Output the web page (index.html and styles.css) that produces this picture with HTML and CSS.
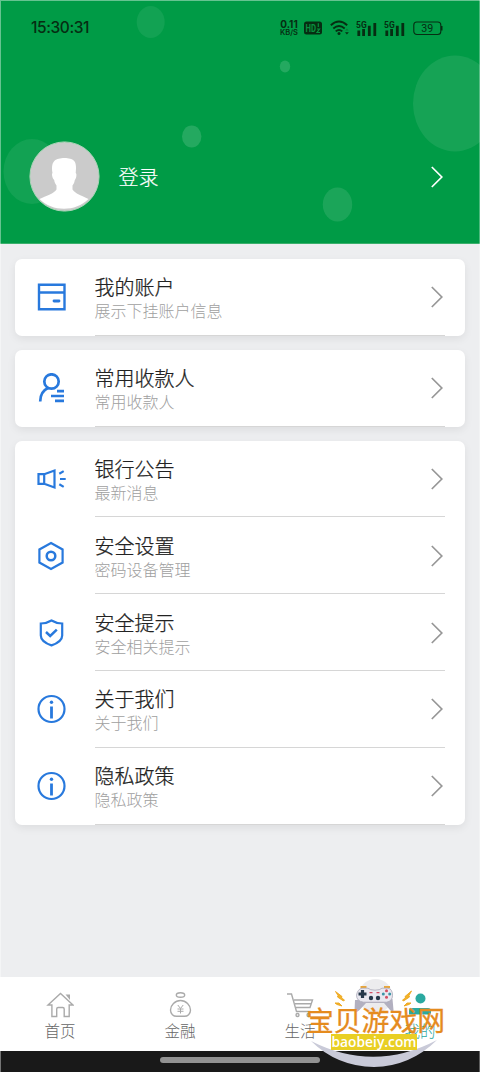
FILE: index.html
```html
<!DOCTYPE html>
<html lang="zh-CN">
<head>
<meta charset="utf-8">
<title>我的</title>
<link rel="stylesheet" href="styles.css">
</head>
<body>
<svg class="defs" width="0" height="0">
  <symbol id="chevron" viewBox="0 0 14 24"><path d="M1.8 2 11.800 12 1.800 22" fill="none" stroke="currentColor" stroke-width="1.700"/></symbol>
  <symbol id="info" viewBox="0 0 30 30"><circle cx="14.500" cy="15" r="13"/><path d="M14.500 12.500V24.500" stroke-width="2.800"/><circle cx="14.500" cy="8.300" r="1.700" fill="currentColor" stroke="none"/></symbol>
</svg>
<div class="screen">
  <header class="header">
    <svg class="bubbles" viewBox="0 0 480 244">
      <g fill="#fff">
        <ellipse cx="150.700" cy="22" rx="14" ry="16" opacity=".07"/>
        <ellipse cx="285" cy="66.500" rx="5.200" ry="6" opacity=".14"/>
        <ellipse cx="455" cy="103.500" rx="42" ry="48" opacity=".085"/>
        <ellipse cx="191.700" cy="136.500" rx="9.700" ry="11" opacity=".14"/>
        <ellipse cx="32" cy="171.500" rx="28.500" ry="32.500" opacity=".07"/>
        <ellipse cx="337.500" cy="204.500" rx="14.700" ry="17" opacity=".105"/>
      </g>
    </svg>
    <div class="status">
      <span class="clock">15:30:31</span>
      <span class="speed"><b>0.11</b><i>KB/S</i></span>
      <svg class="hd" width="18" height="14" viewBox="0 0 18 14"><rect y=".5" width="18" height="13" rx="2.500" fill="currentColor"/><text x="1.500" y="10.900" font-size="10.500" font-weight="700" textLength="10.500" lengthAdjust="spacingAndGlyphs">HD</text><path d="M14.300 2.200V6M13 8h2.500L13 11.500h3" fill="none" stroke="#08903f" stroke-width="1.200"/></svg>
      <svg class="wifi" width="20" height="16" viewBox="0 0 20 16"><g fill="none" stroke="currentColor" stroke-width="1.900"><path d="M.8 5.200Q9 -2.200 17.200 5.200M3.300 8.400Q9 3.600 14.700 8.400M5.700 11.400Q9 8.600 12.300 11.400"/></g><circle cx="9" cy="13.500" r="1.500" fill="currentColor"/><path d="m15.200 10.500 1.700-2 1.700 2z" fill="#087635"/><path d="m15 12.300 1.900 2.200 1.900-2.200z" fill="currentColor"/></svg>
      <svg class="signal" width="22" height="17" viewBox="0 0 22 17"><text x="0" y="7.500" font-size="8.500" font-weight="700">5G</text><path d="M2.800 10.500v5.500M7.600 9v7M13.300 5.800V16M18.800 3V16" fill="none" stroke="currentColor" stroke-width="2.800"/></svg>
      <svg class="signal" width="22" height="17" viewBox="0 0 22 17"><text x="0" y="7.500" font-size="8.500" font-weight="700">5G</text><path d="M2.800 10.500v5.500M7.600 9v7M13.300 5.800V16M18.800 3V16" fill="none" stroke="currentColor" stroke-width="2.800"/></svg>
      <svg class="battery" width="31" height="15" viewBox="0 0 31 15"><rect x=".8" y="1" width="27" height="12.500" rx="3" fill="none" stroke="currentColor" stroke-width="1.100"/><path d="M28 5h1.500v4.500H28z" fill="currentColor"/><text x="8.300" y="11.300" font-size="11" textLength="12" lengthAdjust="spacingAndGlyphs">39</text></svg>
    </div>
    <div class="profile">
      <svg class="avatar" width="71" height="71" viewBox="0 0 71 71"><circle cx="35.500" cy="35.500" r="34.600" fill="#cbcbcb" stroke="#a9d4b6" stroke-width="1"/><path d="M23.500 32C21.500 19 27 17.400 35.500 17c8.500.3 13 2 11.200 15 1.300.5.800 5.500-.9 7-.5 3.500-1.800 4.500-2.300 5.500v4c3 4.500 8.500 5.500 16 9.500-13 13-36 13-49 0 8-4 14-5 17-9.500v-4c-1.500-2-2-3.500-2.300-5.500-1.700-1.500-2.900-6-1.700-7Z" fill="#fff"/></svg>
      <span class="login">登录</span>
      <svg class="chevron" width="14" height="24"><use href="#chevron"/></svg>
    </div>
  </header>
  <main class="content">
    <section class="card">
      <div class="row">
        <svg class="icon" viewBox="0 0 30 30"><path d="M2 2.800h25.500v24.500H2zM2 10.500h25.500" stroke-width="2.400"/><path d="M17 19h5" stroke-width="2.800" stroke-linecap="round"/></svg>
        <div class="body"><div class="text"><h2>我的账户</h2><p>展示下挂账户信息</p></div><svg class="chevron" width="14" height="24"><use href="#chevron"/></svg></div>
      </div>
    </section>
    <section class="card">
      <div class="row">
        <svg class="icon" viewBox="0 0 30 30"><g stroke-width="2.700"><circle cx="14.500" cy="8.500" r="7.200"/><path d="M3.200 28.500Q3.200 18.500 11.500 14.800M20 18.200h7M14 23h13M18 27.800h9"/></g></svg>
        <div class="body"><div class="text"><h2>常用收款人</h2><p>常用收款人</p></div><svg class="chevron" width="14" height="24"><use href="#chevron"/></svg></div>
      </div>
    </section>
    <section class="card">
      <div class="row">
        <svg class="icon" viewBox="0 0 30 30"><path d="M1.500 10.200h5.700v9.600H1.500zM7.200 10.200 17.500 6.500v17L7.200 19.800M22.300 9.700l4.400-2.600M23 15h5.700M22.300 20.300l4.400 2.600"/></svg>
        <div class="body"><div class="text"><h2>银行公告</h2><p>最新消息</p></div><svg class="chevron" width="14" height="24"><use href="#chevron"/></svg></div>
      </div>
      <div class="row">
        <svg class="icon" viewBox="0 0 30 30"><path d="m14 2 11.600 6.500v13L14 28 2.400 21.500v-13z"/><circle cx="14" cy="15" r="4.300" stroke-width="2.500"/></svg>
        <div class="body"><div class="text"><h2>安全设置</h2><p>密码设备管理</p></div><svg class="chevron" width="14" height="24"><use href="#chevron"/></svg></div>
      </div>
      <div class="row">
        <svg class="icon" viewBox="0 0 30 30"><path d="M14.500 2.500Q19.500 5.500 25.200 5.500v12c0 5-5.200 8-10.700 9.900C9 25.500 3.800 22.500 3.800 17.500v-12Q9.500 5.500 14.500 2.500Z"/><path d="m9 14 4.200 4 6.600-6.300" stroke-width="2.500"/></svg>
        <div class="body"><div class="text"><h2>安全提示</h2><p>安全相关提示</p></div><svg class="chevron" width="14" height="24"><use href="#chevron"/></svg></div>
      </div>
      <div class="row">
        <svg class="icon"><use href="#info"/></svg>
        <div class="body"><div class="text"><h2>关于我们</h2><p>关于我们</p></div><svg class="chevron" width="14" height="24"><use href="#chevron"/></svg></div>
      </div>
      <div class="row">
        <svg class="icon"><use href="#info"/></svg>
        <div class="body"><div class="text"><h2>隐私政策</h2><p>隐私政策</p></div><svg class="chevron" width="14" height="24"><use href="#chevron"/></svg></div>
      </div>
    </section>
  </main>
  <nav class="tabs">
    <a class="tab"><svg width="28" height="28" viewBox="0 0 28 28"><path d="M2 14 14.500 2.500 27 14h-3.800v11.500h-5V18q0-1.500-1.500-1.500h-4.500Q10.700 16.500 10.700 18v7.500H5.900V14Z"/><path d="M19.500 3.500h4.500V9z" fill="currentColor" stroke="none"/></svg><span>首页</span></a>
    <a class="tab"><svg width="28" height="28" viewBox="0 0 28 28"><ellipse cx="14.500" cy="4" rx="4.200" ry="2.300"/><path d="M14.500 9.500c-5.500 0-10 5-10 9.500 0 4 3 6.300 6 6.300h8c3 0 6-2.300 6-6.300 0-4.500-4.500-9.500-10-9.500Z"/><path d="m11.800 14 2.700 3.500 2.700-3.500M14.500 17.500v5M11.500 18h6M11.500 20.300h6" stroke-width="1"/></svg><span>金融</span></a>
    <a class="tab"><svg width="28" height="28" viewBox="0 0 28 28"><path d="M1 3h4.500l5 17.500h14M8 9h18.500L24 16.500H10M9 12.800h16"/><circle cx="11.500" cy="24" r="1.500"/><circle cx="22.500" cy="24" r="1.500"/></svg><span>生活</span></a>
    <a class="tab active"><svg width="28" height="28" viewBox="0 0 28 28"><g fill="currentColor" stroke="none"><circle cx="14.500" cy="7.500" r="5"/><path d="M3 23.500V20q0-3 3-3h16q3 0 3 3v3.500z"/></g></svg><span>我的</span></a>
  </nav>
  <div class="gesture"><span></span></div>
  <div class="watermark">
    <svg width="142" height="94" viewBox="305 978 142 94">
      <circle cx="375.500" cy="996" r="17" fill="#ececee"/>
      <path d="M360.500 987h6M384 987h6" stroke="#e8a63c" stroke-width="2.200"/>
      <path d="M355 1000 354.500 1011q1.500 2.500 5-1l6.500-7h18l6 7q3.500 3.500 3.500 0l-1-11z" fill="#b2b0c0"/>
      <path d="M362 988.200h6q2 2 7 2t7-2h6q4.500 1 4.500 7 0 6-6 7h-23q-7-1-7-7 1-6 5.500-7Z" fill="#e9e8f0" stroke="#a9a8b8" stroke-width=".8"/>
      <path d="M362.500 990v8M358.500 994h8" stroke="#26384a" stroke-width="3.200"/>
      <g fill="#26384a"><circle cx="371" cy="998" r="2.200"/><circle cx="378" cy="998" r="2.200"/></g>
      <g fill="#d44e62"><circle cx="386.500" cy="990.800" r="1.500"/><circle cx="386.500" cy="997.200" r="1.500"/><path d="M369.500 992h3v1.200h-3zM376.500 992h3v1.200h-3z"/></g>
      <g fill="#3c95a6"><circle cx="383.300" cy="994" r="1.500"/><circle cx="389.700" cy="994" r="1.500"/></g>
      <path d="m335.500 991.500 6.500 5-.5 1.500 3 2-1 1-6-4 .5-1.500zM335 1003h4l3 3-5-1.500zM411.500 991l-6.500 5.500.5 1.500-3 2 1 1 6-4-.5-1.500zM411 1003h-4l-3 3 5-1.500z" fill="#f2b428" stroke="#eda51d" stroke-width=".9"/>
      <path d="M311 1041Q374 1073 437 1040Q410 1066.500 374 1067Q337 1066.500 311 1041Z" fill="#c9cad8"/>
    </svg>
    <strong>宝贝游戏网</strong>
    <em>baobeiy.com</em>
  </div>
</div>
</body>
</html>
```
FILE: styles.css
```css
* { box-sizing: border-box; }
body { margin: 0; font-family: Roboto, "Noto Sans CJK SC", sans-serif; }
h2, p { margin: 0; font-weight: 300; }
svg { display: block; flex: none; }
.defs { position: absolute; }
.screen { position: relative; display: flex; flex-direction: column; width: 480px; height: 1072px; overflow: hidden; background: #edeef0; }
.screen::after { content: ""; position: absolute; inset: 0; box-shadow: inset 1px 1px rgba(255, 255, 255, .4), inset -1px 0 rgba(255, 255, 255, .3); pointer-events: none; }

.header { position: relative; height: 244px; flex: none; background: #009b46; overflow: hidden; border-bottom: 1px solid #3aaf6b; }
.bubbles { position: absolute; inset: 0; width: 480px; height: 244px; }
.status { position: relative; display: flex; align-items: center; height: 56px; padding: 0 36px 0 31px; color: #062d12; }
.status text { fill: currentColor; font-family: Roboto, sans-serif; }
.status .hd text { fill: #08903f; }
.clock { flex: 1; font: 500 15.500px/20px Inter, sans-serif; letter-spacing: -.4px; }
.speed { display: flex; flex-direction: column; align-items: center; width: 20px; margin-right: 5px; white-space: nowrap; }
.speed b { font: 700 10px/9px Inter, sans-serif; }
.speed i { font: 600 7.500px/8px Inter, sans-serif; }
.wifi { margin-left: 8px; }
.signal { margin-left: 6px; }
.battery { margin-left: 7px; }
.profile { position: relative; display: flex; align-items: center; margin-top: 85px; padding: 0 36px 0 28.500px; color: #fff; }
.login { flex: 1; padding: 3px 0 0 19px; font-size: 20px; line-height: 28px; font-weight: 300; -webkit-text-stroke: .2px; }

.content { flex: 1; display: flex; flex-direction: column; gap: 14px; padding: 15px 15px 0; }
.card { background: #fff; border-radius: 7px; box-shadow: 0 3px 8px rgba(0, 0, 0, .07); }
.row { display: flex; align-items: center; height: 76.800px; padding: 0 20px 0 22px; }
.icon { width: 30px; height: 30px; fill: none; stroke: #2879dd; stroke-width: 2.200; color: #2879dd; }
.body { flex: 1; display: flex; align-items: center; height: 100%; margin-left: 28px; border-bottom: 1px solid #d6d6d6; }
.text { flex: 1; padding-top: 5px; }
.text h2 { font-size: 20px; line-height: 26px; color: #222; -webkit-text-stroke: .25px; }
.text p { font-size: 16px; line-height: 22px; color: #a0a0a0; }
.text h2, .text p { margin-left: -.5px; }
.body .chevron { margin: 1px 1px 0 0; color: #969696; }

.tabs { display: flex; height: 74px; flex: none; background: #fff; }
.tab { flex: 1; display: flex; flex-direction: column; align-items: center; padding-top: 14px; color: #aaa; }
.tab svg { fill: none; stroke: currentColor; stroke-width: 1.400; }
.tab span { padding-top: 2px; font-size: 15.500px; line-height: 22px; font-weight: 300; color: #666; }
.tab.active, .tab.active span { color: #2aa9a0; }
.gesture { height: 21px; flex: none; display: flex; justify-content: center; padding-top: 6px; background: #191919; }
.gesture span { width: 160px; height: 6px; border-radius: 3px; background: #929292; }

.watermark { position: absolute; left: 305px; top: 978px; width: 142px; height: 94px; }
.watermark strong { position: absolute; left: 1px; top: 25px; font-size: 27.800px; line-height: 38px; font-weight: 400; color: #e58b1e; white-space: nowrap; -webkit-text-stroke: .3px #e58b1e; }
.watermark em { position: absolute; left: 26px; top: 56px; width: 86px; height: 16px; background: #e9cf24; color: #fff; font: 600 13.800px/15px "Open Sans", sans-serif; text-align: center; }
```
